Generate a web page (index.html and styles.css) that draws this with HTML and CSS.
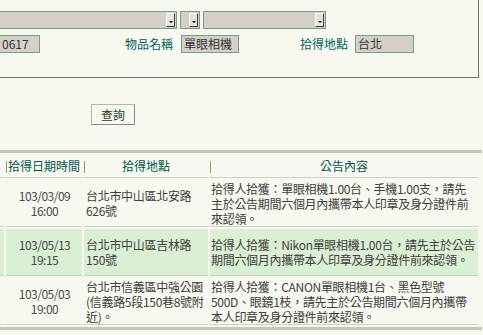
FILE: index.html
```html
<!DOCTYPE html>
<html lang="zh-Hant">
<head>
<meta charset="utf-8">
<title>拾得物公告查詢</title>
<link rel="stylesheet" href="styles.css">
</head>
<body>
<div class="wrap">
  <div class="box">
    <div class="row row-top">
      <div class="select sel-a"><span class="arrow"></span></div>
      <div class="select sel-b"><span class="arrow"></span></div>
      <div class="select sel-c"><span class="arrow"></span></div>
    </div>
    <div class="row row-fields">
      <div class="field in-date">0617</div>
      <span class="label lb-item">物品名稱</span>
      <div class="field in-item">單眼相機</div>
      <span class="label lb-place">拾得地點</span>
      <div class="field in-place">台北</div>
    </div>
  </div>
  <div class="actions"><button class="btn">查詢</button></div>
  <div class="bar"></div>
  <table class="grid">
    <thead>
      <tr>
        <th class="c0"></th>
        <th class="c1">拾得日期時間</th>
        <th class="c2">拾得地點</th>
        <th class="c3">公告內容</th>
      </tr>
    </thead>
    <tbody>
      <tr>
        <td></td>
        <td class="date">103/03/09<br>16:00</td>
        <td class="place">台北市中山區北安路<br>626號</td>
        <td class="notice">拾得人拾獲：單眼相機1.00台、手機1.00支，請先<br>主於公告期間六個月內攜帶本人印章及身分證件前<br>來認領。</td>
      </tr>
      <tr class="alt">
        <td></td>
        <td class="date">103/05/13<br>19:15</td>
        <td class="place">台北市中山區吉林路<br>150號</td>
        <td class="notice">拾得人拾獲：Nikon單眼相機1.00台，請先主於公告<br>期間六個月內攜帶本人印章及身分證件前來認領。</td>
      </tr>
      <tr>
        <td></td>
        <td class="date">103/05/03<br>19:00</td>
        <td class="place">台北市信義區中強公園<br>(信義路5段150巷8號附<br>近)。</td>
        <td class="notice">拾得人拾獲：CANON單眼相機1台、黑色型號<br>500D、眼鏡1枝，請先主於公告期間六個月內攜帶<br>本人印章及身分證件前來認領。</td>
      </tr>
    </tbody>
  </table>
  <div class="bar"></div>
</div>
</body>
</html>
```
FILE: styles.css
```css
html, body {
  margin: 0;
  padding: 0;
  background: #f7f9f0;
  overflow: hidden;
}
body {
  font-family: "Noto Sans CJK TC", "Noto Sans", sans-serif;
  font-size: 12px;
  color: #404040;
}
.wrap {
  margin: -20px 0 0 -40px;
  width: 522px;
}
.box {
  width: 517px;
  border: 1px solid #747474;
  padding: 30px 0 24px 0;
}
.row {
  display: flex;
  align-items: center;
  height: 18px;
}
.row-fields {
  margin-top: 6px;
}
.select {
  box-sizing: border-box;
  height: 18px;
  background: #d4d0c8;
  border: 1px solid #73a282;
  display: flex;
  justify-content: flex-end;
  padding: 1px;
}
.sel-a { margin-left: 10px; width: 206px; }
.sel-b { margin-left: 3px; width: 20px; }
.sel-c { margin-left: 3px; width: 123px; }
.arrow {
  box-sizing: border-box;
  width: 9px;
  height: 14px;
  background: #e6e3dc;
  border-top: 1px solid #ffffff;
  border-left: 1px solid #ffffff;
  border-right: 1px solid #404040;
  border-bottom: 1px solid #404040;
  display: flex;
  align-items: center;
  justify-content: center;
  padding-top: 3px;
}
.arrow::after {
  content: "";
  border-left: 2px solid transparent;
  border-right: 2px solid transparent;
  border-top: 2px solid #000;
}
.field {
  box-sizing: border-box;
  height: 18px;
  background: #d4d0c8;
  border: 1px solid #73a282;
  padding: 0 2px;
  line-height: 16px;
  color: #333;
  white-space: nowrap;
  overflow: hidden;
}
.in-date { margin-left: 38px; width: 41px; }
.in-item { width: 58px; }
.in-place { width: 59px; }
.label {
  color: #00615a;
  line-height: 18px;
  margin-right: 8px;
}
.lb-item { margin-left: 85px; }
.lb-place { margin-left: 61px; margin-right: 7px; }
.actions {
  padding: 26px 0 0 131px;
  height: 21px;
}
.btn {
  box-sizing: border-box;
  width: 44px;
  height: 21px;
  margin: 0;
  padding: 0;
  background: #f7f9f0;
  border: 1px solid;
  border-color: #b4b4b4 #8a8a8a #8a8a8a #b4b4b4;
  font-family: "Noto Sans CJK TC", sans-serif;
  font-size: 12px;
  color: #1f3d1f;
  line-height: 19px;
}
.bar {
  height: 3px;
  background: #bfc9b5;
  width: 522px;
}
.actions + .bar { margin-top: 25px; }
.grid {
  border-collapse: separate;
  border-spacing: 2px;
  width: 520px;
  table-layout: fixed;
}
.grid th {
  height: 22px;
  padding: 0;
  font-weight: normal;
  color: #00574f;
  border-bottom: 1px solid #cdd1c6;
  background: linear-gradient(#9a9e5a, #9a9e5a) no-repeat left 6px / 1px 12px;
  line-height: 22px;
  text-align: center;
}
.grid .c0 { width: 42px; }
.grid .c1 { width: 76px; }
.grid .c2 { width: 124px; }
.grid .c3 { width: 268px; }
.grid tbody tr { height: 47px; }
.grid td {
  padding: 0 1px 0 2px;
  border-bottom: 1px solid #cdd1c6;
  line-height: 15px;
  vertical-align: middle;
}
.grid tr.alt td { background: #daefd3; }
.grid td.date {
  text-align: center;
  letter-spacing: -0.5px;
  color: #4a4a4a;
}
.grid td.place {
  white-space: nowrap;
  letter-spacing: -0.3px;
}
.grid td.notice {
  padding-left: 1px;
  white-space: nowrap;
  overflow: hidden;
  letter-spacing: -0.3px;
}
```
